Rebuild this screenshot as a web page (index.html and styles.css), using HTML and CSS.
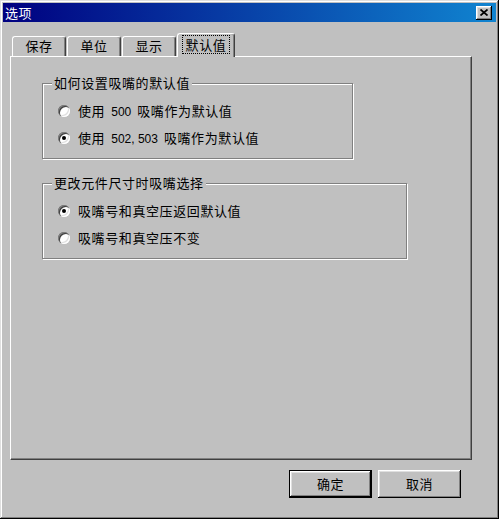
FILE: index.html
```html
<!DOCTYPE html>
<html lang="zh-CN">
<head>
<meta charset="utf-8">
<title>选项</title>
<link rel="stylesheet" href="styles.css">
</head>
<body>
<div class="window">
  <div class="titlebar">
    <span class="title">选项</span>
    <span class="close">
      <svg width="8" height="7" viewBox="0 0 8 7"><path d="M0.5 0.5 L7.5 6.5 M7.5 0.5 L0.5 6.5" stroke="#000" stroke-width="1.7" fill="none"/></svg>
    </span>
  </div>
  <div class="content">
    <div class="tabs">
      <div class="tab">保存</div>
      <div class="tab">单位</div>
      <div class="tab">显示</div>
      <div class="tab active"><span class="focus">默认值</span></div>
    </div>
    <div class="panel">
      <fieldset class="group g1">
        <legend>如何设置吸嘴的默认值</legend>
        <div class="opt"><span class="radio"></span><span class="lbl">使用<span class="num">500</span>吸嘴作为默认值</span></div>
        <div class="opt"><span class="radio on"></span><span class="lbl">使用<span class="num">502, 503</span>吸嘴作为默认值</span></div>
      </fieldset>
      <fieldset class="group g2">
        <legend>更改元件尺寸时吸嘴选择</legend>
        <div class="opt"><span class="radio on"></span><span class="lbl">吸嘴号和真空压返回默认值</span></div>
        <div class="opt"><span class="radio"></span><span class="lbl">吸嘴号和真空压不变</span></div>
      </fieldset>
    </div>
    <div class="buttons">
      <div class="btn default"><span>确定</span></div>
      <div class="btn"><span>取消</span></div>
    </div>
  </div>
</div>
</body>
</html>
```

FILE: styles.css
```css
html, body {
  margin: 0;
  padding: 0;
  background: #c0c0c0;
}
body {
  font-family: "Noto Sans CJK SC", "Liberation Sans", sans-serif;
  font-size: 13px;
  line-height: 16px;
  color: #000;
}
.window {
  width: 499px;
  height: 519px;
  box-sizing: border-box;
  padding: 3px;
  background: #c0c0c0;
  box-shadow: inset -1px -1px #000, inset 1px 1px #dfdfdf, inset -2px -2px #808080, inset 2px 2px #fff;
}
.titlebar {
  height: 19px;
  display: flex;
  align-items: center;
  padding-left: 2px;
  background: linear-gradient(90deg, #000080, #1084d0);
}
.title {
  color: #fff;
  letter-spacing: 0.5px;
}
.close {
  margin-left: auto;
  margin-right: 4px;
  width: 16px;
  height: 14px;
  box-sizing: border-box;
  background: #c0c0c0;
  box-shadow: inset -1px -1px #000, inset 1px 1px #fff, inset -2px -2px #808080, inset 2px 2px #dfdfdf;
  display: flex;
  align-items: center;
  justify-content: center;
}
.close svg { display: block; }
.content {
  padding: 11px 24px 0 7px;
}
.tabs {
  display: flex;
  align-items: flex-end;
  height: 24px;
  margin-bottom: -1px;
  padding-left: 2px;
  position: relative;
  z-index: 1;
}
.tab {
  box-sizing: border-box;
  width: 54px;
  height: 20px;
  margin-bottom: 1px;
  border-top: 1px solid #fff;
  border-left: 1px solid #fff;
  border-right: 1px solid #404040;
  border-radius: 3px 3px 0 0;
  box-shadow: inset -1px 0 #808080;
  text-align: center;
  line-height: 18px;
  letter-spacing: 0.6px;
  margin-right: 1px;
}
.tab.active {
  width: 58px;
  height: 24px;
  margin-bottom: 0;
  background: #c0c0c0;
  line-height: 18px;
  padding-top: 2px;
}
.focus {
  display: inline-block;
  outline: 1px dotted #000;
  padding: 0 3px 0 3px;
  line-height: 17px;
}
.panel {
  box-sizing: border-box;
  width: 462px;
  height: 404px;
  border-top: 1px solid #fff;
  border-left: 1px solid #fff;
  border-right: 1px solid #404040;
  border-bottom: 1px solid #404040;
  box-shadow: inset -1px -1px #808080;
  padding: 18px 0 0 31px;
}
.group {
  box-sizing: border-box;
  margin: 0;
  padding: 12px 0 12px 15px;
  border: 1px solid #808080;
  box-shadow: inset 1px 1px #fff, 1px 1px #fff;
}
.group legend {
  padding: 0 2px;
  margin-left: -6px;
  background: #c0c0c0;
  letter-spacing: 0.6px;
  line-height: 16px;
}
.g1 { width: 311px; }
.g2 { width: 365px; margin-top: 16px; }
.opt {
  display: flex;
  align-items: center;
  height: 16px;
}
.opt + .opt { margin-top: 11px; }
.radio {
  width: 12px;
  height: 12px;
  border-radius: 50%;
  background: #fff;
  box-shadow: inset 1px 1px #808080, inset 2px 2px #404040, inset -1px -1px #fff, inset -2px -2px #dfdfdf;
  margin-right: 8px;
  display: flex;
  align-items: center;
  justify-content: center;
}
.radio.on::after {
  content: "";
  width: 4px;
  height: 4px;
  border-radius: 50%;
  background: #000;
}
.lbl {
  letter-spacing: 0.6px;
}
.num {
  font-family: "Liberation Sans", sans-serif;
  font-size: 12px;
  letter-spacing: 0;
  margin: 0 6px 0 6px;
}
.buttons {
  display: flex;
  justify-content: flex-end;
  gap: 6px;
  margin-top: 10px;
  padding-right: 11px;
}
.btn {
  box-sizing: border-box;
  width: 83px;
  height: 28px;
  display: flex;
  align-items: center;
  justify-content: center;
  background: #c0c0c0;
  box-shadow: inset -1px -1px #000, inset 1px 1px #fff, inset -2px -2px #808080, inset 2px 2px #dfdfdf;
  letter-spacing: 0.6px;
}
.btn.default {
  border: 1px solid #000;
}
```
